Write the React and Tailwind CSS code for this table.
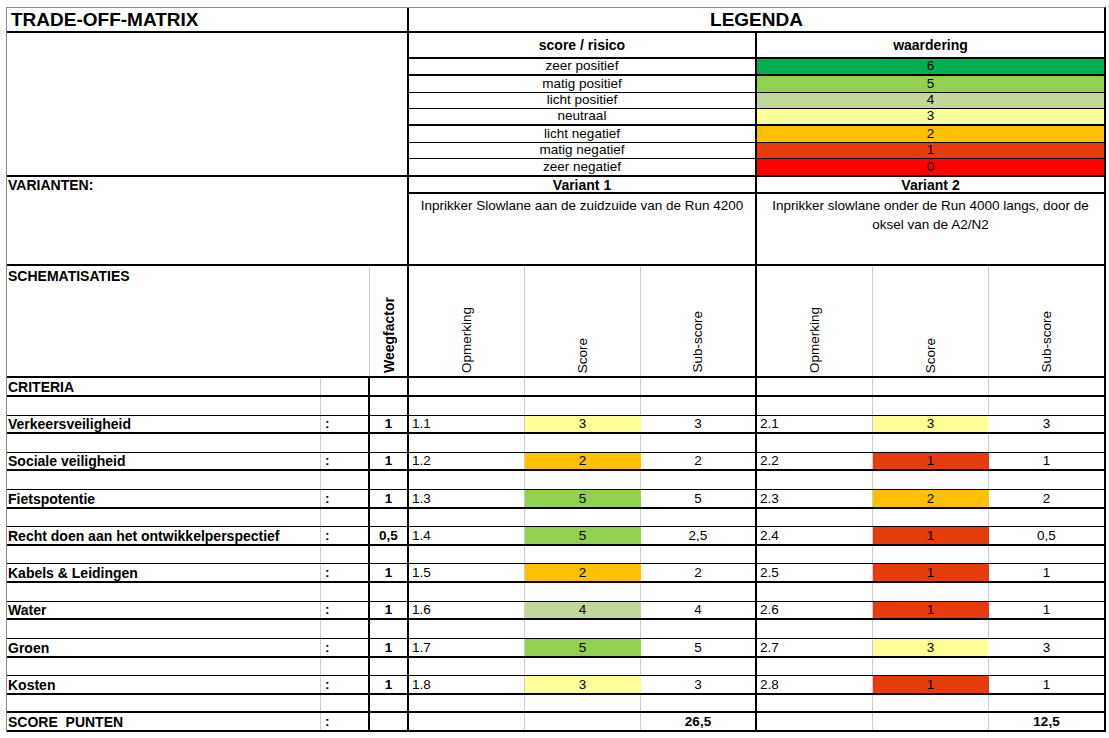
import React from 'react';

const FILL = {
  6: 'bg-[#00b050]',
  5: 'bg-[#92d050]',
  4: 'bg-[#c4d79b]',
  3: 'bg-[#ffff99]',
  2: 'bg-[#ffc000]',
  1: 'bg-[#e63b0b]',
  0: 'bg-[#ff0000]',
};

const legend = [
  { label: 'zeer positief', v: 6, row: 'h-[17px] border-b-2' },
  { label: 'matig positief', v: 5, row: 'h-[17px] border-b' },
  { label: 'licht positief', v: 4, row: 'h-[16px] border-b' },
  { label: 'neutraal', v: 3, row: 'h-[17px] border-b-2' },
  { label: 'licht negatief', v: 2, row: 'h-[17px] border-b' },
  { label: 'matig negatief', v: 1, row: 'h-[16px] border-b' },
  { label: 'zeer negatief', v: 0, row: 'h-[16px]' },
];

// sh = spacer row height, dh = data row height
const criteria = [
  { name: 'Verkeersveiligheid', w: '1', v1: ['1.1', 3, '3'], v2: ['2.1', 3, '3'], sh: 'h-[19px]', dh: 'h-[18px]' },
  { name: 'Sociale veiligheid', w: '1', v1: ['1.2', 2, '2'], v2: ['2.2', 1, '1'], sh: 'h-[19px]', dh: 'h-[18px]' },
  { name: 'Fietspotentie', w: '1', v1: ['1.3', 5, '5'], v2: ['2.3', 2, '2'], sh: 'h-[19px]', dh: 'h-[19px]' },
  { name: 'Recht doen aan het ontwikkelperspectief', w: '0,5', v1: ['1.4', 5, '2,5'], v2: ['2.4', 1, '0,5'], sh: 'h-[18px]', dh: 'h-[19px]' },
  { name: 'Kabels & Leidingen', w: '1', v1: ['1.5', 2, '2'], v2: ['2.5', 1, '1'], sh: 'h-[18px]', dh: 'h-[19px]' },
  { name: 'Water', w: '1', v1: ['1.6', 4, '4'], v2: ['2.6', 1, '1'], sh: 'h-[19px]', dh: 'h-[18px]' },
  { name: 'Groen', w: '1', v1: ['1.7', 5, '5'], v2: ['2.7', 3, '3'], sh: 'h-[19px]', dh: 'h-[19px]' },
  { name: 'Kosten', w: '1', v1: ['1.8', 3, '3'], v2: ['2.8', 1, '1'], sh: 'h-[18px]', dh: 'h-[19px]' },
];

const GRAY = 'border-r border-[#cccccc]';

function ScoreCell({ score }) {
  const fill = score === undefined ? '' : `${FILL[score]} border-r-transparent`;
  return (
    <div className={`w-[116px] shrink-0 ${GRAY} ${fill} flex items-center justify-center`}>
      {score}
    </div>
  );
}

function Row({ h, line, crit, colon, weeg, v1 = [], v2 = [], bold }) {
  const b = bold ? 'font-bold' : '';
  return (
    <div className={`flex ${h} ${line} border-black`}>
      <div className={`w-[314px] shrink-0 ${GRAY} pl-[1px] flex items-center font-bold text-[14px] whitespace-pre`}>{crit}</div>
      <div className="w-[49px] shrink-0 border-r-2 border-black pl-[4px] flex items-center font-bold">{colon}</div>
      <div className="w-[39px] shrink-0 border-r-2 border-black flex items-center justify-center font-bold">{weeg}</div>
      <div className={`w-[116px] shrink-0 ${GRAY} pl-[3px] flex items-center`}>{v1[0]}</div>
      <ScoreCell score={v1[1]} />
      <div className={`w-[116px] shrink-0 border-r-2 border-black flex items-center justify-center ${b}`}>{v1[2]}</div>
      <div className={`w-[116px] shrink-0 ${GRAY} pl-[3px] flex items-center`}>{v2[0]}</div>
      <ScoreCell score={v2[1]} />
      <div className={`flex-1 flex items-center justify-center ${b}`}>{v2[2]}</div>
    </div>
  );
}

function Vertical({ children, bold }) {
  return (
    <div className="h-full flex items-end justify-center pb-[3px]">
      <span className={`[writing-mode:vertical-rl] rotate-180 leading-none ${bold ? 'font-bold text-[14px]' : ''}`}>{children}</span>
    </div>
  );
}

export default function App() {
  return (
    <div className="w-[1109px] h-[738px] bg-white overflow-hidden text-black text-[13.5px] leading-[16px] font-['Liberation_Sans',Arial,sans-serif]">
      <div className="ml-[6px] mt-[7px] w-[1100px] border-t border-l border-t-[#8a8a8a] border-l-[#8a8a8a] border-r-2 border-r-black">
        {/* title */}
        <div className="flex h-[25px] border-b-2 border-black">
          <div className="w-[402px] shrink-0 border-r-2 border-black pl-[4px] flex items-center text-[19px] font-bold">TRADE-OFF-MATRIX</div>
          <div className="flex-1 flex items-center justify-center text-[19px] font-bold">LEGENDA</div>
        </div>

        {/* legend */}
        <div className="flex h-[144px] border-b-2 border-black">
          <div className="w-[402px] shrink-0 border-r-2 border-black" />
          <div className="flex-1 flex flex-col">
            <div className="flex h-[26px] border-b-2 border-black font-bold text-[14px]">
              <div className="w-[348px] shrink-0 border-r-2 border-black flex items-center justify-center">score / risico</div>
              <div className="flex-1 flex items-center justify-center">waardering</div>
            </div>
            {legend.map((l) => (
              <div key={l.v} className={`flex ${l.row} border-black`}>
                <div className="w-[348px] shrink-0 border-r-2 border-black flex items-end justify-center">{l.label}</div>
                <div className={`flex-1 flex items-end justify-center ${FILL[l.v]}`}>{l.v}</div>
              </div>
            ))}
          </div>
        </div>

        {/* variants */}
        <div className="flex h-[89px] border-b-2 border-black">
          <div className="w-[402px] shrink-0 border-r-2 border-black pl-[1px] font-bold text-[14px]">VARIANTEN:</div>
          <div className="w-[348px] shrink-0 border-r-2 border-black flex flex-col">
            <div className="h-[17px] border-b-2 border-black flex items-center justify-center font-bold text-[14px]">Variant 1</div>
            <div className="flex-1 text-center pt-[2px] leading-[19px]">Inprikker Slowlane aan de zuidzuide van de Run 4200</div>
          </div>
          <div className="flex-1 flex flex-col">
            <div className="h-[17px] border-b-2 border-black flex items-center justify-center font-bold text-[14px]">Variant 2</div>
            <div className="flex-1 text-center pt-[2px] leading-[19px]">
              Inprikker slowlane onder de Run 4000 langs, door de
              <br />
              oksel van de A2/N2
            </div>
          </div>
        </div>

        {/* schematisaties / column headers */}
        <div className="flex h-[112px] border-b-2 border-black">
          <div className={`w-[363px] shrink-0 ${GRAY} pl-[1px] pt-[2px] font-bold text-[14px]`}>SCHEMATISATIES</div>
          <div className="w-[39px] shrink-0 border-r-2 border-black"><Vertical bold>Weegfactor</Vertical></div>
          <div className={`w-[116px] shrink-0 ${GRAY}`}><Vertical>Opmerking</Vertical></div>
          <div className={`w-[116px] shrink-0 ${GRAY}`}><Vertical>Score</Vertical></div>
          <div className="w-[116px] shrink-0 border-r-2 border-black"><Vertical>Sub-score</Vertical></div>
          <div className={`w-[116px] shrink-0 ${GRAY}`}><Vertical>Opmerking</Vertical></div>
          <div className={`w-[116px] shrink-0 ${GRAY}`}><Vertical>Score</Vertical></div>
          <div className="flex-1"><Vertical>Sub-score</Vertical></div>
        </div>

        <Row h="h-[19px]" line="border-b-2" crit="CRITERIA" />
        {criteria.map((c) => (
          <React.Fragment key={c.name}>
            <Row h={c.sh} line="border-b" />
            <Row h={c.dh} line="border-b-2" crit={c.name} colon=":" weeg={c.w} v1={c.v1} v2={c.v2} />
          </React.Fragment>
        ))}
        <Row h="h-[18px]" line="border-b-2" />
        <Row h="h-[19px]" line="border-b-2" crit="SCORE  PUNTEN" colon=":" v1={[null, undefined, '26,5']} v2={[null, undefined, '12,5']} bold />
      </div>
    </div>
  );
}
